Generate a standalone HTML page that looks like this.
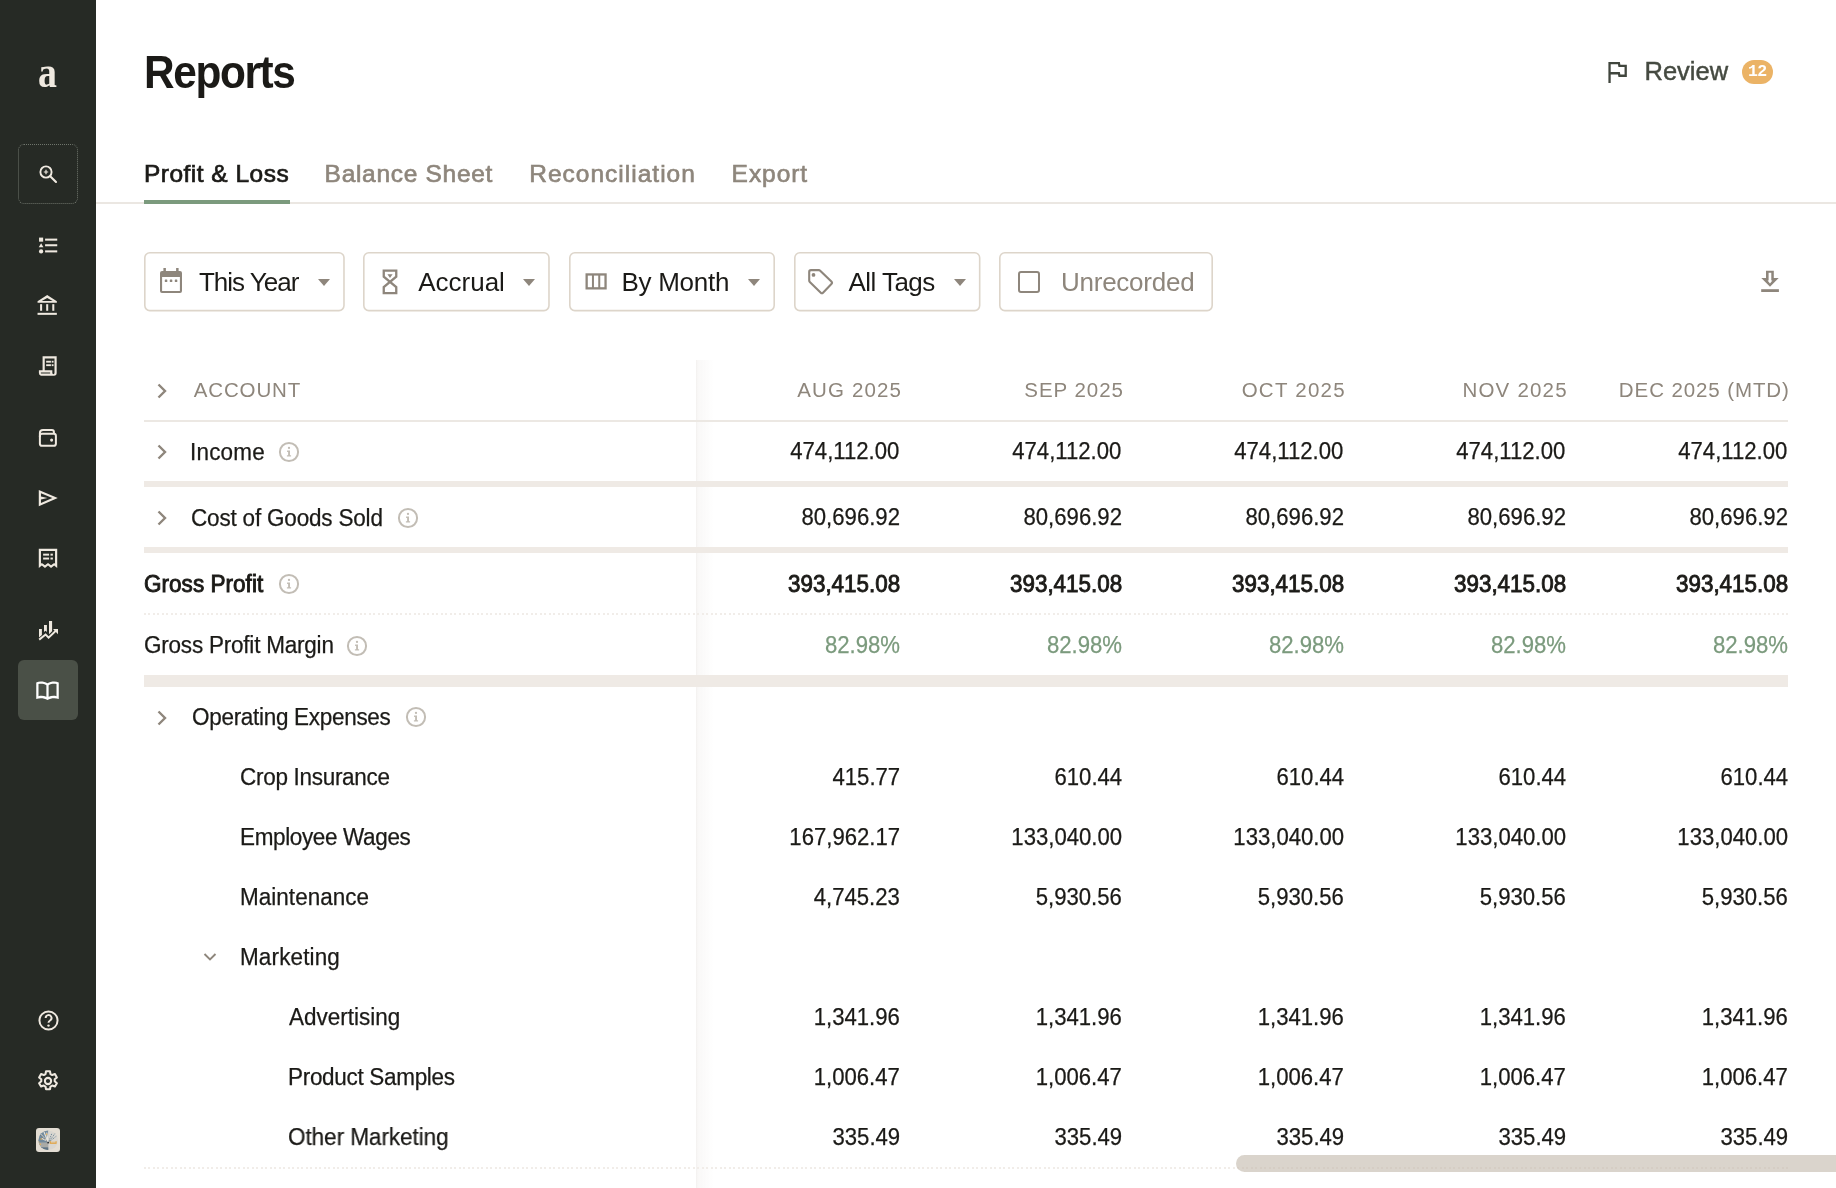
<!DOCTYPE html>
<html lang="en">
<head>
<meta charset="utf-8">
<title>Reports</title>
<style>
*{box-sizing:border-box;margin:0;padding:0}
html,body{width:1836px;height:1188px;overflow:hidden;background:#fff}
body{font-family:"Liberation Sans",sans-serif;color:#1b1a17;position:relative}
.t{position:absolute;white-space:nowrap;line-height:1}
#wrap{position:absolute;left:0;top:0;width:1836px;height:1188px;will-change:transform}
#side{position:absolute;left:0;top:0;width:96px;height:1188px;background:#262a25}
.ico{position:absolute;left:34px;width:28px;height:28px}
.ico svg{display:block;width:28px;height:28px}
#logo{position:absolute;left:0;width:95px;text-align:center;top:51px;transform:scaleX(0.86);font-family:"Liberation Serif",serif;font-weight:bold;font-size:44px;line-height:1;color:#efe9e0}
#searchbox{position:absolute;left:18px;top:144px;width:60px;height:60px;border:1.2px dotted #6f756c;border-radius:6px}
#activebox{position:absolute;left:18px;top:660px;width:60px;height:60px;background:#4a5047;border-radius:6px}
#title{left:143.8px;top:49.1px;font-size:46.5px;font-weight:bold;letter-spacing:-1.5px;color:#1b1a17;transform-origin:0 0;transform:scaleX(0.911)}
.tab{font-size:24.5px;color:#8e867c;top:162.4px;-webkit-text-stroke:0.65px #8e867c}
#tabline{position:absolute;left:96px;top:202.3px;width:1740px;height:1.7px;background:#ebe7e2}
#tabul{position:absolute;left:144px;top:199.5px;width:145.5px;height:4.5px;background:#7b9a7d}
.btn{position:absolute;top:252px;height:59.5px;border:1.8px solid #dcd4c9;border-radius:6px;background:#fff}
.btxt{font-size:26px;top:269px;color:#1b1a17;letter-spacing:-1px}
.caret{position:absolute;top:279px;width:0;height:0;border-left:6.1px solid transparent;border-right:6.1px solid transparent;border-top:7.3px solid #8e867c}
.hd{color:#8e867c}
.lbl{}
.num{position:absolute;white-space:nowrap;line-height:1;text-align:right}
.sep{position:absolute;left:144px;width:1644px;background:#efeae5}
.dot{position:absolute;left:144px;width:1644px;height:2px;background:repeating-linear-gradient(to right,#f1ede9 0,#f1ede9 1.6px,transparent 1.6px,transparent 4.5px)}
.svgabs{position:absolute;display:block}
#shadow{position:absolute;left:696px;top:360px;width:18px;height:828px;background:linear-gradient(to right,rgba(120,95,80,0.09) 0,rgba(120,95,80,0.045) 2px,rgba(120,95,80,0.02) 60%,rgba(120,95,80,0))}
#scroll{position:absolute;left:1236px;top:1155px;width:640px;height:17px;border-radius:9px;background:rgba(196,186,172,0.62)}
</style>
</head>
<body>
<div id="wrap">
<div id="side"><div id="logo">a</div><div id="searchbox"></div><div id="activebox"></div>
<svg class="svgabs" style="left:35.5px;top:161.5px;width:24px;height:24px" viewBox="0 0 24 24" fill="#efe9e0" ><circle cx="10" cy="10" r="5.6" fill="none" stroke="#efe9e0" stroke-width="1.9"/><path d="M14.2 14.2 L20 20" stroke="#efe9e0" stroke-width="2.1" stroke-linecap="round"/><path d="M10 7.8v4.4M7.8 10h4.4" stroke="#efe9e0" stroke-width="1.2"/></svg>
<svg class="svgabs" style="left:35.6px;top:233.15px;width:24.5px;height:24.5px" viewBox="0 0 24 24" fill="#efe9e0" ><rect x="3" y="4.5" width="4" height="4"/><path d="M5 10 L7.3 14 H2.7z"/><circle cx="5" cy="18" r="2.1"/><rect x="8.9" y="5.5" width="11.9" height="2"/><rect x="8.9" y="11" width="11.9" height="2"/><rect x="8.9" y="17" width="11.9" height="2"/></svg>
<svg class="svgabs" style="left:35.4px;top:293.1px;width:24.4px;height:24.4px" viewBox="0 0 24 24" fill="#efe9e0" ><path d="M12 2 L21.5 8 V9.6 H2.5 V8z M12 4.8 L6.6 7.9 H17.4z" fill-rule="evenodd"/><rect x="5" y="11" width="2" height="6.5"/><rect x="11" y="11" width="2" height="6.5"/><rect x="17" y="11" width="2" height="6.5"/><rect x="2.5" y="19.5" width="19" height="2"/></svg>
<svg class="svgabs" style="left:35.0px;top:353.0px;width:26px;height:26px" viewBox="0 0 24 24" fill="#efe9e0" ><path d="M7 3 H20 V18.5 a2.5 2.5 0 0 1-2.5 2.5 H5.5 A2.5 2.5 0 0 1 3.6 18.5 V16 H7z M9 5 V16 H16 V18.5 a1 1 0 0 0 2 0 V5z M5.4 18 v.5 a.5.5 0 0 0 .5.5 H14 V18z" fill-rule="evenodd"/><rect x="10.3" y="7.2" width="4.4" height="1.7"/><rect x="15.4" y="7.2" width="1.7" height="1.7"/><rect x="10.3" y="10.4" width="4.4" height="1.7"/><rect x="15.4" y="10.4" width="1.7" height="1.7"/></svg>
<svg class="svgabs" style="left:34px;top:424px;width:28px;height:28px" viewBox="34 424 28 28" fill="none" stroke="#efe9e0" stroke-width="2"><path d="M39.9 437 V433 A3.1 3.1 0 0 1 43 429.9 H51.9 A2 2 0 0 1 53.9 431.9 V433.8"/><rect x="39.9" y="433.8" width="16" height="12.05" rx="2.1"/><circle cx="51.6" cy="440.1" r="1.55" fill="#efe9e0" stroke="none"/></svg>
<svg class="svgabs" style="left:35.0px;top:485.0px;width:26px;height:26px" viewBox="0 0 24 24" fill="#efe9e0" ><path d="M3.5 4.5 L21 12 L3.5 19.5z M5.5 7.5 V10.7 L11.5 12 L5.5 13.3 V16.5 L16 12z" fill-rule="evenodd"/></svg>
<svg class="svgabs" style="left:35.0px;top:545.0px;width:26px;height:26px" viewBox="0 0 24 24" fill="#efe9e0" ><path d="M3.5 3.5 H20.5 V21.2 L17.7 19 L14.8 21.2 L12 19 L9.2 21.2 L6.3 19 L3.5 21.2z M5.5 5.5 V17.2 L6.3 16.5 L9.2 18.7 L12 16.5 L14.8 18.7 L17.7 16.5 L18.5 17.2 V5.5z" fill-rule="evenodd"/><rect x="7.5" y="8" width="5.5" height="1.8"/><rect x="14.3" y="8" width="2.2" height="1.8"/><rect x="7.5" y="11.6" width="5.5" height="1.8"/><rect x="14.3" y="11.6" width="2.2" height="1.8"/></svg>
<svg class="svgabs" style="left:36px;top:618.0px;width:24px;height:24px" viewBox="0 0 24 24" fill="#efe9e0" ><path d="M3 11 H5.9 V17 L3 19.5z"/><path d="M8 7 H10.9 V14 L9.45 12.7 L8 14z"/><path d="M13 3 H16.1 V13.2 L13 16.2z"/><path d="M3.2 21.6 L9.6 16.5 L12.6 19.6 L20.6 12" fill="none" stroke="#efe9e0" stroke-width="2"/><path d="M17 11 H22 V16.2z"/></svg>
<svg class="svgabs" style="left:34.4px;top:676.7px;width:27px;height:27px" viewBox="0 0 24 24" fill="#ffffff" ><path d="M2 4.8 C5 3.6 9 3.8 12 5.6 C15 3.8 19 3.6 22 4.8 V19.6 C19 18.5 15 18.7 12 20.4 C9 18.7 5 18.5 2 19.6z M4 6.3 V17 C6.5 16.4 9 16.7 11 17.6 V7.3 C9 6.1 6.3 5.8 4 6.3z M20 6.3 C17.7 5.8 15 6.1 13 7.3 V17.6 C15 16.7 17.5 16.4 20 17z" fill-rule="evenodd"/></svg>
<svg class="svgabs" style="left:35.5px;top:1007.5px;width:25px;height:25px" viewBox="0 0 24 24" fill="#efe9e0" ><circle cx="12" cy="12" r="8.7" fill="none" stroke="#efe9e0" stroke-width="1.9"/><path d="M9.3 9.6 a2.8 2.8 0 1 1 4.2 2.4 c-1 .6-1.5 1.1-1.5 2.2" fill="none" stroke="#efe9e0" stroke-width="1.9"/><circle cx="12" cy="16.9" r="1.15"/></svg>
<svg class="svgabs" style="left:35.0px;top:1067.7px;width:26px;height:26px" viewBox="0 0 24 24" fill="#efe9e0" ><path fill="none" stroke="#efe9e0" stroke-width="1.9" stroke-linejoin="round" d="M10.2 3 h3.6 l.5 2.6 1.6.9 2.5-.9 1.8 3.1-2 1.7 v1.9 l2 1.7-1.8 3.1-2.5-.9-1.6.9-.5 2.6 h-3.6 l-.5-2.6-1.6-.9-2.5.9-1.8-3.1 2-1.7 v-1.9 l-2-1.7 1.8-3.1 2.5.9 1.6-.9z"/><circle cx="12" cy="12" r="2.9" fill="none" stroke="#efe9e0" stroke-width="1.9"/></svg>
<svg class="svgabs" style="left:36px;top:1128px;width:24px;height:24px" viewBox="0 0 24 24"><rect width="24" height="24" rx="3" fill="#e3ddd3"/><clipPath id="avc"><circle cx="12.2" cy="12.3" r="9.8"/></clipPath><g clip-path="url(#avc)"><rect x="2" y="2" width="10.3" height="21" fill="#738b9d"/><rect x="12.3" y="2" width="10" height="21" fill="#d9d6d0"/><rect x="2" y="14.5" width="10.3" height="5" fill="#a9aaa6"/><rect x="2" y="19.5" width="10.3" height="3" fill="#5f7382"/><path d="M12.2 14.5 L5 6.5 M12.2 14.5 L8 4 M12.2 14.5 L10.8 4.5 M12.2 13.5 L6 10.5" stroke="#e8e4dc" stroke-width="1.1" fill="none"/><path d="M12.2 14.5 L4.8 7.2" stroke="#2e3338" stroke-width="0.9" stroke-dasharray="1.2 1"/><path d="M12.4 14.5 L19 5.5 M12.4 14.5 L20.5 8 M12.4 14.5 L16 5" stroke="#6f8797" stroke-width="1" stroke-dasharray="1.1 0.9" fill="none"/><rect x="13.8" y="13.2" width="6.8" height="2.6" fill="#e2a23f"/><rect x="14.8" y="13.2" width="4.8" height="1.3" fill="#d9d6d0"/><circle cx="5.3" cy="11" r="0.8" fill="#f0b24c"/><circle cx="10.6" cy="6.2" r="0.8" fill="#f0b24c"/><circle cx="4.2" cy="16.3" r="0.8" fill="#f0b24c"/><circle cx="2.6" cy="14" r="0.7" fill="#f0b24c"/><rect x="11.3" y="14" width="1.8" height="1.4" fill="#2e3338"/></g></svg>
</div>
<div id="title" class="t">Reports</div>
<div class="t tab" style="left:144px;letter-spacing:0.48px;color:#1b1a17;-webkit-text-stroke:0.7px #1b1a17">Profit &amp; Loss</div>
<div class="t tab" style="left:324.6px;letter-spacing:0.7px">Balance Sheet</div>
<div class="t tab" style="left:529.3px;letter-spacing:1.0px">Reconciliation</div>
<div class="t tab" style="left:731.6px;letter-spacing:0.95px">Export</div>
<div id="tabline"></div><div id="tabul"></div>
<svg class="svgabs" style="left:1600px;top:54px;width:36px;height:36px" viewBox="1600 54 36 36"><path d="M1609.55 83 V63.2 H1618.9 L1619.4 65.8 H1625.7 V75.75 H1619.4 L1618.9 73.25 H1609.55" fill="none" stroke="#41463e" stroke-width="2.3" stroke-linejoin="miter"/></svg>
<div class="t" style="left:1644.5px;top:59.0px;font-size:25.5px;color:#454a41;-webkit-text-stroke:0.45px #454a41;letter-spacing:0.0px">Review</div>
<div style="position:absolute;left:1741.7px;top:60px;width:31.3px;height:24px;border-radius:12px;background:#ebb366"></div>
<div class="t" style="left:1741.7px;width:31.3px;text-align:center;top:63.9px;font-family:'Liberation Mono',monospace;font-weight:bold;font-size:16.5px;color:#fff;letter-spacing:-0.5px;text-indent:0px">12</div>
<svg class="svgabs" style="left:143.2px;top:251.0px;width:202.8px;height:61.4px" viewBox="143.2 251.0 202.8 61.4"><rect x="145.0" y="252.8" width="199.20000000000002" height="57.8" rx="5" fill="#fff" stroke="#ddd5ca" stroke-width="1.6"/></svg>
<div class="t btxt" style="left:198.9px;letter-spacing:-1.0px">This Year</div>
<div class="caret" style="left:317.5px"></div>
<svg class="svgabs" style="left:362.2px;top:251.0px;width:188.8px;height:61.4px" viewBox="362.2 251.0 188.8 61.4"><rect x="364.0" y="252.8" width="185.20000000000002" height="57.8" rx="5" fill="#fff" stroke="#ddd5ca" stroke-width="1.6"/></svg>
<div class="t btxt" style="left:418.2px;letter-spacing:0.0px">Accrual</div>
<div class="caret" style="left:522.5px"></div>
<svg class="svgabs" style="left:568px;top:251.0px;width:208px;height:61.4px" viewBox="568 251.0 208 61.4"><rect x="569.8" y="252.8" width="204.4" height="57.8" rx="5" fill="#fff" stroke="#ddd5ca" stroke-width="1.6"/></svg>
<div class="t btxt" style="left:621.4px;letter-spacing:-0.25px">By Month</div>
<div class="caret" style="left:748px"></div>
<svg class="svgabs" style="left:793px;top:251.0px;width:188.5px;height:61.4px" viewBox="793 251.0 188.5 61.4"><rect x="794.8" y="252.8" width="184.9" height="57.8" rx="5" fill="#fff" stroke="#ddd5ca" stroke-width="1.6"/></svg>
<div class="t btxt" style="left:848.5px;letter-spacing:-0.55px">All Tags</div>
<div class="caret" style="left:953.5px"></div>
<svg class="svgabs" style="left:998px;top:251.0px;width:216px;height:61.4px" viewBox="998 251.0 216 61.4"><rect x="999.8" y="252.8" width="212.4" height="57.8" rx="5" fill="#fff" stroke="#ddd5ca" stroke-width="1.6"/></svg>
<div class="t btxt" style="left:1061px;color:#8e867c;letter-spacing:-0.25px">Unrecorded</div>
<div style="position:absolute;left:1018px;top:271px;width:22px;height:22px;border:2px solid #8e867c;border-radius:3px"></div>
<svg class="svgabs" style="left:158px;top:266px;width:28px;height:28px" viewBox="0 0 28 28" fill="#8e867c"><path d="M4 5 H22 A2 2 0 0 1 24 7 V25 A2 2 0 0 1 22 27 H4 A2 2 0 0 1 2 25 V7 A2 2 0 0 1 4 5z M4.1 11.1 V24.9 H21.9 V11.1z" fill-rule="evenodd"/><rect x="5.4" y="2" width="2.5" height="4"/><rect x="18.1" y="2" width="2.5" height="4"/><rect x="6.8" y="13.6" width="2.5" height="2.4" rx=".5"/><rect x="11.8" y="13.6" width="2.5" height="2.4" rx=".5"/><rect x="16.8" y="13.6" width="2.5" height="2.4" rx=".5"/></svg>
<svg class="svgabs" style="left:376px;top:264px;width:28px;height:36px" viewBox="376 264 28 36"><path d="M383.75 270.65 H396.25 V276.7 L383.75 287.1 V293.15 H396.25 V287.1 L383.75 276.7z" fill="none" stroke="#8e867c" stroke-width="2.3" stroke-linejoin="miter"/><path d="M387.4 274.3 H392.6 L390 277.9z" fill="#8e867c"/></svg>
<svg class="svgabs" style="left:580px;top:268px;width:32px;height:28px" viewBox="580 268 32 28"><rect x="586.65" y="274.45" width="18.9" height="13.9" fill="none" stroke="#8e867c" stroke-width="2.3"/><path d="M592.95 274 V289 M599.25 274 V289" stroke="#8e867c" stroke-width="2"/></svg>
<svg class="svgabs" style="left:804px;top:264px;width:34px;height:36px" viewBox="804 264 34 36"><path d="M811 270.1 H818.8 Q819.6 270.1 820.2 270.7 L831.4 281.6 Q832.6 282.8 831.4 284 L823 292.7 Q821.9 293.8 820.8 292.7 L809.8 282 Q809.2 281.4 809.2 280.6 V271.9 Q809.2 270.1 811 270.1z" fill="none" stroke="#8e867c" stroke-width="2.1" stroke-linejoin="round"/><circle cx="813.5" cy="274.9" r="1.9" fill="#8e867c"/></svg>
<svg class="svgabs" style="left:1754px;top:264px;width:32px;height:34px" viewBox="1754 264 32 34" fill="#8e867c"><path d="M1766 270.7 H1773.8 V278.1 H1778.7 L1770 286.8 L1761.3 278.1 H1766z M1768.6 272.8 V280.4 H1767.6 L1770 283.6 L1772.4 280.4 H1771.3 V272.8z" fill-rule="evenodd"/><rect x="1761.2" y="289.2" width="17.7" height="2.8"/></svg>
<div id="shadow"></div>
<svg class="svgabs" style="left:154.7px;top:380.8px;width:14px;height:20px" viewBox="0 0 14 20"><path d="M3.5 3.5 L10 10 L3.5 16.5" fill="none" stroke="#8e867c" stroke-width="2.4"/></svg>
<div class="t hd" style="left:193.78px;top:379.85px;font-size:20.5px;letter-spacing:0.855px;transform-origin:0 0;transform:scaleX(1);">ACCOUNT</div>
<div class="t hd" style="left:797.33px;top:379.85px;font-size:20.5px;letter-spacing:1.108px;transform-origin:0 0;transform:scaleX(1);">AUG 2025</div>
<div class="t hd" style="left:1024.37px;top:379.85px;font-size:20.5px;letter-spacing:0.937px;transform-origin:0 0;transform:scaleX(1);">SEP 2025</div>
<div class="t hd" style="left:1241.68px;top:379.85px;font-size:20.5px;letter-spacing:1.245px;transform-origin:0 0;transform:scaleX(1);">OCT 2025</div>
<div class="t hd" style="left:1462.47px;top:379.85px;font-size:20.5px;letter-spacing:1.202px;transform-origin:0 0;transform:scaleX(1);">NOV 2025</div>
<div class="t hd" style="left:1618.87px;top:379.85px;font-size:20.5px;letter-spacing:0.896px;transform-origin:0 0;transform:scaleX(1);">DEC 2025 (MTD)</div>
<div class="sep" style="top:419.5px;height:2px;background:#ece8e3"></div>
<svg class="svgabs" style="left:154.7px;top:441.8px;width:14px;height:20px" viewBox="0 0 14 20"><path d="M3.5 3.5 L10 10 L3.5 16.5" fill="none" stroke="#8e867c" stroke-width="2.4"/></svg>
<div class="t lbl" style="left:190.46px;top:440.85px;font-size:23.1px;letter-spacing:0.189px;transform-origin:0 0;transform:scaleX(0.974);-webkit-text-stroke:0.25px #1b1a17;">Income</div>
<svg class="svgabs" style="left:278.35px;top:440.55px;width:22px;height:22px" viewBox="0 0 22 22"><circle cx="11" cy="11" r="9.1" fill="none" stroke="#c2bdb5" stroke-width="2"/><circle cx="11" cy="6.9" r="1.15" fill="#c2bdb5"/><path d="M9.1 9.6 H12 V14.3 H13.1 V15.6 H8.9 V14.3 H10.1 V10.9 H9.1z" fill="#c2bdb5"/></svg>
<div class="num" style="right:936.20px;top:440.42px;font-size:23.6px;transform-origin:100% 0;transform:scaleX(0.938);-webkit-text-stroke:0.25px #1b1a17;">474,112.00</div>
<div class="num" style="right:714.20px;top:440.42px;font-size:23.6px;transform-origin:100% 0;transform:scaleX(0.938);-webkit-text-stroke:0.25px #1b1a17;">474,112.00</div>
<div class="num" style="right:492.20px;top:440.42px;font-size:23.6px;transform-origin:100% 0;transform:scaleX(0.938);-webkit-text-stroke:0.25px #1b1a17;">474,112.00</div>
<div class="num" style="right:270.20px;top:440.42px;font-size:23.6px;transform-origin:100% 0;transform:scaleX(0.938);-webkit-text-stroke:0.25px #1b1a17;">474,112.00</div>
<div class="num" style="right:48.20px;top:440.42px;font-size:23.6px;transform-origin:100% 0;transform:scaleX(0.938);-webkit-text-stroke:0.25px #1b1a17;">474,112.00</div>
<div class="sep" style="top:481.1px;height:6.2px"></div>
<svg class="svgabs" style="left:154.7px;top:507.79999999999995px;width:14px;height:20px" viewBox="0 0 14 20"><path d="M3.5 3.5 L10 10 L3.5 16.5" fill="none" stroke="#8e867c" stroke-width="2.4"/></svg>
<div class="t lbl" style="left:191.20px;top:506.55px;font-size:23.1px;letter-spacing:-0.191px;transform-origin:0 0;transform:scaleX(0.974);-webkit-text-stroke:0.25px #1b1a17;">Cost of Goods Sold</div>
<svg class="svgabs" style="left:397.35px;top:506.55px;width:22px;height:22px" viewBox="0 0 22 22"><circle cx="11" cy="11" r="9.1" fill="none" stroke="#c2bdb5" stroke-width="2"/><circle cx="11" cy="6.9" r="1.15" fill="#c2bdb5"/><path d="M9.1 9.6 H12 V14.3 H13.1 V15.6 H8.9 V14.3 H10.1 V10.9 H9.1z" fill="#c2bdb5"/></svg>
<div class="num" style="right:936.20px;top:506.12px;font-size:23.6px;transform-origin:100% 0;transform:scaleX(0.938);-webkit-text-stroke:0.25px #1b1a17;">80,696.92</div>
<div class="num" style="right:714.20px;top:506.12px;font-size:23.6px;transform-origin:100% 0;transform:scaleX(0.938);-webkit-text-stroke:0.25px #1b1a17;">80,696.92</div>
<div class="num" style="right:492.20px;top:506.12px;font-size:23.6px;transform-origin:100% 0;transform:scaleX(0.938);-webkit-text-stroke:0.25px #1b1a17;">80,696.92</div>
<div class="num" style="right:270.20px;top:506.12px;font-size:23.6px;transform-origin:100% 0;transform:scaleX(0.938);-webkit-text-stroke:0.25px #1b1a17;">80,696.92</div>
<div class="num" style="right:48.20px;top:506.12px;font-size:23.6px;transform-origin:100% 0;transform:scaleX(0.938);-webkit-text-stroke:0.25px #1b1a17;">80,696.92</div>
<div class="sep" style="top:547.1px;height:6.2px"></div>
<div class="t lbl" style="left:143.82px;top:573.05px;font-size:23.1px;letter-spacing:0.040px;transform-origin:0 0;transform:scaleX(0.974);-webkit-text-stroke:0.9px #1b1a17;">Gross Profit</div>
<svg class="svgabs" style="left:278.35px;top:572.55px;width:22px;height:22px" viewBox="0 0 22 22"><circle cx="11" cy="11" r="9.1" fill="none" stroke="#c2bdb5" stroke-width="2"/><circle cx="11" cy="6.9" r="1.15" fill="#c2bdb5"/><path d="M9.1 9.6 H12 V14.3 H13.1 V15.6 H8.9 V14.3 H10.1 V10.9 H9.1z" fill="#c2bdb5"/></svg>
<div class="num" style="right:936.20px;top:572.62px;font-size:23.6px;transform-origin:100% 0;transform:scaleX(0.949);-webkit-text-stroke:0.9px #1b1a17;">393,415.08</div>
<div class="num" style="right:714.20px;top:572.62px;font-size:23.6px;transform-origin:100% 0;transform:scaleX(0.949);-webkit-text-stroke:0.9px #1b1a17;">393,415.08</div>
<div class="num" style="right:492.20px;top:572.62px;font-size:23.6px;transform-origin:100% 0;transform:scaleX(0.949);-webkit-text-stroke:0.9px #1b1a17;">393,415.08</div>
<div class="num" style="right:270.20px;top:572.62px;font-size:23.6px;transform-origin:100% 0;transform:scaleX(0.949);-webkit-text-stroke:0.9px #1b1a17;">393,415.08</div>
<div class="num" style="right:48.20px;top:572.62px;font-size:23.6px;transform-origin:100% 0;transform:scaleX(0.949);-webkit-text-stroke:0.9px #1b1a17;">393,415.08</div>
<div class="dot" style="top:613px"></div>
<div class="t lbl" style="left:143.76px;top:634.15px;font-size:23.1px;letter-spacing:-0.219px;transform-origin:0 0;transform:scaleX(0.974);-webkit-text-stroke:0.25px #1b1a17;">Gross Profit Margin</div>
<svg class="svgabs" style="left:346.35px;top:634.55px;width:22px;height:22px" viewBox="0 0 22 22"><circle cx="11" cy="11" r="9.1" fill="none" stroke="#c2bdb5" stroke-width="2"/><circle cx="11" cy="6.9" r="1.15" fill="#c2bdb5"/><path d="M9.1 9.6 H12 V14.3 H13.1 V15.6 H8.9 V14.3 H10.1 V10.9 H9.1z" fill="#c2bdb5"/></svg>
<div class="num" style="right:936.20px;top:633.72px;font-size:23.6px;transform-origin:100% 0;transform:scaleX(0.938);color:#7b9a7d;-webkit-text-stroke:0.25px #7b9a7d;">82.98%</div>
<div class="num" style="right:714.20px;top:633.72px;font-size:23.6px;transform-origin:100% 0;transform:scaleX(0.938);color:#7b9a7d;-webkit-text-stroke:0.25px #7b9a7d;">82.98%</div>
<div class="num" style="right:492.20px;top:633.72px;font-size:23.6px;transform-origin:100% 0;transform:scaleX(0.938);color:#7b9a7d;-webkit-text-stroke:0.25px #7b9a7d;">82.98%</div>
<div class="num" style="right:270.20px;top:633.72px;font-size:23.6px;transform-origin:100% 0;transform:scaleX(0.938);color:#7b9a7d;-webkit-text-stroke:0.25px #7b9a7d;">82.98%</div>
<div class="num" style="right:48.20px;top:633.72px;font-size:23.6px;transform-origin:100% 0;transform:scaleX(0.938);color:#7b9a7d;-webkit-text-stroke:0.25px #7b9a7d;">82.98%</div>
<div class="sep" style="top:675.1px;height:11.5px"></div>
<svg class="svgabs" style="left:154.7px;top:707.8px;width:14px;height:20px" viewBox="0 0 14 20"><path d="M3.5 3.5 L10 10 L3.5 16.5" fill="none" stroke="#8e867c" stroke-width="2.4"/></svg>
<div class="t lbl" style="left:191.65px;top:705.95px;font-size:23.1px;letter-spacing:-0.301px;transform-origin:0 0;transform:scaleX(0.974);-webkit-text-stroke:0.25px #1b1a17;">Operating Expenses</div>
<svg class="svgabs" style="left:404.75px;top:705.75px;width:22px;height:22px" viewBox="0 0 22 22"><circle cx="11" cy="11" r="9.1" fill="none" stroke="#c2bdb5" stroke-width="2"/><circle cx="11" cy="6.9" r="1.15" fill="#c2bdb5"/><path d="M9.1 9.6 H12 V14.3 H13.1 V15.6 H8.9 V14.3 H10.1 V10.9 H9.1z" fill="#c2bdb5"/></svg>
<div class="t lbl" style="left:239.55px;top:766.05px;font-size:23.1px;letter-spacing:-0.297px;transform-origin:0 0;transform:scaleX(0.974);-webkit-text-stroke:0.25px #1b1a17;">Crop Insurance</div>
<div class="num" style="right:936.20px;top:765.62px;font-size:23.6px;transform-origin:100% 0;transform:scaleX(0.938);-webkit-text-stroke:0.25px #1b1a17;">415.77</div>
<div class="num" style="right:714.20px;top:765.62px;font-size:23.6px;transform-origin:100% 0;transform:scaleX(0.938);-webkit-text-stroke:0.25px #1b1a17;">610.44</div>
<div class="num" style="right:492.20px;top:765.62px;font-size:23.6px;transform-origin:100% 0;transform:scaleX(0.938);-webkit-text-stroke:0.25px #1b1a17;">610.44</div>
<div class="num" style="right:270.20px;top:765.62px;font-size:23.6px;transform-origin:100% 0;transform:scaleX(0.938);-webkit-text-stroke:0.25px #1b1a17;">610.44</div>
<div class="num" style="right:48.20px;top:765.62px;font-size:23.6px;transform-origin:100% 0;transform:scaleX(0.938);-webkit-text-stroke:0.25px #1b1a17;">610.44</div>
<div class="t lbl" style="left:239.86px;top:826.15px;font-size:23.1px;letter-spacing:-0.367px;transform-origin:0 0;transform:scaleX(0.974);-webkit-text-stroke:0.25px #1b1a17;">Employee Wages</div>
<div class="num" style="right:936.20px;top:825.72px;font-size:23.6px;transform-origin:100% 0;transform:scaleX(0.938);-webkit-text-stroke:0.25px #1b1a17;">167,962.17</div>
<div class="num" style="right:714.20px;top:825.72px;font-size:23.6px;transform-origin:100% 0;transform:scaleX(0.938);-webkit-text-stroke:0.25px #1b1a17;">133,040.00</div>
<div class="num" style="right:492.20px;top:825.72px;font-size:23.6px;transform-origin:100% 0;transform:scaleX(0.938);-webkit-text-stroke:0.25px #1b1a17;">133,040.00</div>
<div class="num" style="right:270.20px;top:825.72px;font-size:23.6px;transform-origin:100% 0;transform:scaleX(0.938);-webkit-text-stroke:0.25px #1b1a17;">133,040.00</div>
<div class="num" style="right:48.20px;top:825.72px;font-size:23.6px;transform-origin:100% 0;transform:scaleX(0.938);-webkit-text-stroke:0.25px #1b1a17;">133,040.00</div>
<div class="t lbl" style="left:239.86px;top:886.15px;font-size:23.1px;letter-spacing:0.029px;transform-origin:0 0;transform:scaleX(0.974);-webkit-text-stroke:0.25px #1b1a17;">Maintenance</div>
<div class="num" style="right:936.20px;top:885.72px;font-size:23.6px;transform-origin:100% 0;transform:scaleX(0.938);-webkit-text-stroke:0.25px #1b1a17;">4,745.23</div>
<div class="num" style="right:714.20px;top:885.72px;font-size:23.6px;transform-origin:100% 0;transform:scaleX(0.938);-webkit-text-stroke:0.25px #1b1a17;">5,930.56</div>
<div class="num" style="right:492.20px;top:885.72px;font-size:23.6px;transform-origin:100% 0;transform:scaleX(0.938);-webkit-text-stroke:0.25px #1b1a17;">5,930.56</div>
<div class="num" style="right:270.20px;top:885.72px;font-size:23.6px;transform-origin:100% 0;transform:scaleX(0.938);-webkit-text-stroke:0.25px #1b1a17;">5,930.56</div>
<div class="num" style="right:48.20px;top:885.72px;font-size:23.6px;transform-origin:100% 0;transform:scaleX(0.938);-webkit-text-stroke:0.25px #1b1a17;">5,930.56</div>
<div class="t lbl" style="left:239.52px;top:946.15px;font-size:23.1px;letter-spacing:0.135px;transform-origin:0 0;transform:scaleX(0.974);-webkit-text-stroke:0.25px #1b1a17;">Marketing</div>
<div class="t lbl" style="left:288.96px;top:1006.05px;font-size:23.1px;letter-spacing:-0.005px;transform-origin:0 0;transform:scaleX(0.974);-webkit-text-stroke:0.25px #1b1a17;">Advertising</div>
<div class="num" style="right:936.20px;top:1005.62px;font-size:23.6px;transform-origin:100% 0;transform:scaleX(0.938);-webkit-text-stroke:0.25px #1b1a17;">1,341.96</div>
<div class="num" style="right:714.20px;top:1005.62px;font-size:23.6px;transform-origin:100% 0;transform:scaleX(0.938);-webkit-text-stroke:0.25px #1b1a17;">1,341.96</div>
<div class="num" style="right:492.20px;top:1005.62px;font-size:23.6px;transform-origin:100% 0;transform:scaleX(0.938);-webkit-text-stroke:0.25px #1b1a17;">1,341.96</div>
<div class="num" style="right:270.20px;top:1005.62px;font-size:23.6px;transform-origin:100% 0;transform:scaleX(0.938);-webkit-text-stroke:0.25px #1b1a17;">1,341.96</div>
<div class="num" style="right:48.20px;top:1005.62px;font-size:23.6px;transform-origin:100% 0;transform:scaleX(0.938);-webkit-text-stroke:0.25px #1b1a17;">1,341.96</div>
<div class="t lbl" style="left:288.12px;top:1066.15px;font-size:23.1px;letter-spacing:-0.314px;transform-origin:0 0;transform:scaleX(0.974);-webkit-text-stroke:0.25px #1b1a17;">Product Samples</div>
<div class="num" style="right:936.20px;top:1065.72px;font-size:23.6px;transform-origin:100% 0;transform:scaleX(0.938);-webkit-text-stroke:0.25px #1b1a17;">1,006.47</div>
<div class="num" style="right:714.20px;top:1065.72px;font-size:23.6px;transform-origin:100% 0;transform:scaleX(0.938);-webkit-text-stroke:0.25px #1b1a17;">1,006.47</div>
<div class="num" style="right:492.20px;top:1065.72px;font-size:23.6px;transform-origin:100% 0;transform:scaleX(0.938);-webkit-text-stroke:0.25px #1b1a17;">1,006.47</div>
<div class="num" style="right:270.20px;top:1065.72px;font-size:23.6px;transform-origin:100% 0;transform:scaleX(0.938);-webkit-text-stroke:0.25px #1b1a17;">1,006.47</div>
<div class="num" style="right:48.20px;top:1065.72px;font-size:23.6px;transform-origin:100% 0;transform:scaleX(0.938);-webkit-text-stroke:0.25px #1b1a17;">1,006.47</div>
<div class="t lbl" style="left:287.73px;top:1126.25px;font-size:23.1px;letter-spacing:-0.045px;transform-origin:0 0;transform:scaleX(0.974);-webkit-text-stroke:0.25px #1b1a17;">Other Marketing</div>
<div class="num" style="right:936.20px;top:1125.82px;font-size:23.6px;transform-origin:100% 0;transform:scaleX(0.938);-webkit-text-stroke:0.25px #1b1a17;">335.49</div>
<div class="num" style="right:714.20px;top:1125.82px;font-size:23.6px;transform-origin:100% 0;transform:scaleX(0.938);-webkit-text-stroke:0.25px #1b1a17;">335.49</div>
<div class="num" style="right:492.20px;top:1125.82px;font-size:23.6px;transform-origin:100% 0;transform:scaleX(0.938);-webkit-text-stroke:0.25px #1b1a17;">335.49</div>
<div class="num" style="right:270.20px;top:1125.82px;font-size:23.6px;transform-origin:100% 0;transform:scaleX(0.938);-webkit-text-stroke:0.25px #1b1a17;">335.49</div>
<div class="num" style="right:48.20px;top:1125.82px;font-size:23.6px;transform-origin:100% 0;transform:scaleX(0.938);-webkit-text-stroke:0.25px #1b1a17;">335.49</div>
<svg class="svgabs" style="left:202px;top:951.3px;width:16px;height:12px" viewBox="0 0 16 12"><path d="M2.5 3 L8 8.5 L13.5 3" fill="none" stroke="#8e867c" stroke-width="1.9"/></svg>
<div class="dot" style="top:1166.5px"></div>
<div id="scroll"></div>
</div>
</body>
</html>
